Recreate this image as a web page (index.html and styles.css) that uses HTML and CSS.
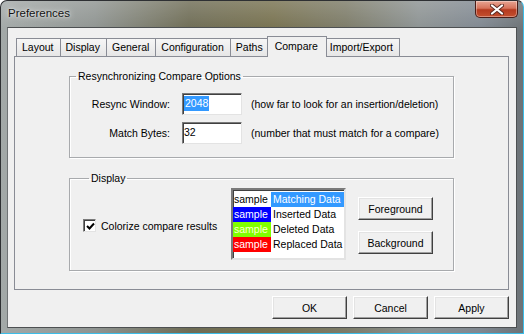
FILE: index.html
```html
<!DOCTYPE html>
<html lang="en">
<head>
    <meta charset="UTF-8">
    <title>Preferences</title>
    <link rel="stylesheet" href="styles.css">
</head>
<body>
    <div class="window">
        <div class="titlebar">
            <span class="title">Preferences</span>
            <button class="close" aria-label="Close">
                <svg width="14" height="11" viewBox="0 0 14 11">
                    <path d="M2 1.5 L12 9.5 M12 1.5 L2 9.5" stroke="#5a2a22" stroke-width="4" stroke-linecap="round"/>
                    <path d="M2 1.5 L12 9.5 M12 1.5 L2 9.5" stroke="#fff" stroke-width="2.2" stroke-linecap="round"/>
                </svg>
            </button>
        </div>

        <div class="client">
            <div class="tabs">
                <span class="tab">Layout</span>
                <span class="tab">Display</span>
                <span class="tab">General</span>
                <span class="tab">Configuration</span>
                <span class="tab">Paths</span>
                <span class="tab active">Compare</span>
                <span class="tab">Import/Export</span>
            </div>

            <div class="panel">
                <fieldset class="group resync">
                    <legend>Resynchronizing Compare Options</legend>
                    <div class="field-row">
                        <label>Resync Window:</label>
                        <span class="edit"><span class="selected">2048</span></span>
                        <span class="hint">(how far to look for an insertion/deletion)</span>
                    </div>
                    <div class="field-row">
                        <label>Match Bytes:</label>
                        <span class="edit">32</span>
                        <span class="hint">(number that must match for a compare)</span>
                    </div>
                </fieldset>

                <fieldset class="group display">
                    <legend>Display</legend>
                    <label class="check">
                        <span class="box">
                            <svg width="9" height="9" viewBox="0 0 9 9">
                                <path d="M1 4 L3.5 6.5 L8 1.5" fill="none" stroke="#000" stroke-width="2"/>
                            </svg>
                        </span>
                        Colorize compare results
                    </label>

                    <div class="listbox">
                        <div class="row"><span class="sample">sample</span><span class="name matching">Matching Data</span></div>
                        <div class="row"><span class="sample inserted">sample</span><span class="name">Inserted Data</span></div>
                        <div class="row"><span class="sample deleted">sample</span><span class="name">Deleted Data</span></div>
                        <div class="row"><span class="sample replaced">sample</span><span class="name">Replaced Data</span></div>
                    </div>

                    <div class="color-buttons">
                        <button class="btn">Foreground</button>
                        <button class="btn">Background</button>
                    </div>
                </fieldset>
            </div>

            <div class="actions">
                <button class="btn">OK</button>
                <button class="btn">Cancel</button>
                <button class="btn">Apply</button>
            </div>
        </div>
    </div>
</body>
</html>
```

FILE: styles.css
```css
* {
    box-sizing: border-box;
}

body {
    margin: 0;
    font-family: "Liberation Sans", Arial, sans-serif;
    font-size: 10.5px;
    color: #000;
}

.window {
    width: 524px;
    height: 334px;
    display: flex;
    flex-direction: column;
    border: 1px solid #2e3033;
    border-right-color: #3cbde8;
    border-bottom-color: #3cbde8;
    border-radius: 7px 7px 0 0;
    background:
        linear-gradient(180deg, rgba(255, 255, 255, 0.18), rgba(255, 255, 255, 0) 30px),
        linear-gradient(90deg, #a3a9a8 0%, #8f9491 18%, #6e6c55 36%, #77714f 52%, #7c7b68 66%, #8c9292 80%, #7f8790 92%, #6c7276 100%);
}

.titlebar {
    height: 26px;
    display: flex;
    align-items: flex-start;
    padding-left: 7px;
}

.title {
    margin-top: 5px;
    font-size: 11.5px;
    line-height: 14px;
    color: #111;
    text-shadow: 0 0 6px rgba(255, 255, 255, 0.9), 0 0 2px rgba(255, 255, 255, 0.8);
}

.close {
    margin-left: auto;
    margin-right: 5px;
    width: 43px;
    height: 17px;
    padding: 0;
    border: 1px solid #4b1d17;
    border-top: none;
    border-radius: 0 0 5px 5px;
    background: linear-gradient(180deg, #e8a593 0%, #d7735b 45%, #b53a1f 55%, #c4502f 100%);
    box-shadow: inset 0 0 0 1px rgba(255, 255, 255, 0.35);
    display: flex;
    align-items: center;
    justify-content: center;
}

.client {
    flex: 1;
    margin: 0 6px 5px 6px;
    padding: 0 7px 0 6px;
    border: 1px solid #4d5052;
    border-left-color: #6f7375;
    background: #f0f0f0;
    display: flex;
    flex-direction: column;
}

.tabs {
    display: flex;
    align-items: flex-end;
    height: 21px;
    margin-top: 8px;
    margin-bottom: -1px;
    padding-left: 2px;
}

.tab {
    height: 18px;
    margin-bottom: 1px;
    margin-left: -1px;
    padding: 0 6px 0 5px;
    line-height: 17px;
    border: 1px solid #898c95;
    border-bottom: none;
    background: linear-gradient(180deg, #f6f6f6, #e6e6e6);
}

.tab:first-child {
    margin-left: 0;
}

.tab.active {
    position: relative;
    z-index: 1;
    height: 21px;
    margin: 0 -2px 0 -3px;
    padding: 0 8px 0 7px;
    line-height: 19px;
    background: #f0f0f0;
}

.panel {
    height: 234px;
    border: 1px solid #898c95;
    background: #f0f0f0;
}

.group {
    margin: 13px 54px 0;
    border: 1px solid #a8aaad;
    box-shadow: 1px 1px 0 #fff, inset 1px 1px 0 #fff;
    min-width: 0;
}

.group legend {
    margin-left: 6px;
    padding: 0 2px;
    line-height: 13px;
}

.resync {
    padding: 10px 0 13px 0;
}

.field-row {
    display: grid;
    grid-template-columns: 100px 60px auto;
    column-gap: 12px;
    align-items: center;
}

.field-row + .field-row {
    margin-top: 7px;
}

.field-row label {
    text-align: right;
}

.field-row .hint {
    margin-left: -3px;
}

.edit {
    height: 22px;
    padding: 2px 0 0 1px;
    line-height: 15px;
    background: #fff;
    border: 1px solid;
    border-color: #7a7a7a #e3e3e3 #e3e3e3 #7a7a7a;
    box-shadow: inset 1px 1px 0 #404040;
}

.edit .selected {
    display: inline-block;
    padding: 0 1px;
    background: #3399ff;
    color: #fff;
}

.display {
    display: flex;
    align-items: center;
    padding: 3px 0 10px 13px;
    margin-top: 14px;
}

.check {
    width: 148px;
    display: flex;
    align-items: center;
    gap: 5px;
    margin-top: 3px;
}

.box {
    width: 13px;
    height: 13px;
    background: #fff;
    border: 1px solid;
    border-color: #7a7a7a #e3e3e3 #e3e3e3 #7a7a7a;
    box-shadow: inset 1px 1px 0 #404040;
    display: flex;
    align-items: center;
    justify-content: center;
    padding: 1px 0 0 1px;
}

.listbox {
    width: 115px;
    height: 72px;
    padding-top: 2px;
    background: #fff;
    border: 2px solid;
    border-color: #7a7a7a #e3e3e3 #e3e3e3 #7a7a7a;
    box-shadow: inset 1px 1px 0 #404040;
}

.row {
    display: flex;
    line-height: 15px;
}

.sample {
    width: 38px;
    padding-left: 1px;
}

.name {
    flex: 1;
    padding-left: 2px;
}

.name.matching {
    background: #3399ff;
    color: #fff;
}

.sample.inserted {
    background: #0000ff;
    color: #fff;
}

.sample.deleted {
    background: #80ff00;
    color: #ffffd0;
}

.sample.replaced {
    background: #ff0000;
    color: #fff;
}

.color-buttons {
    display: flex;
    flex-direction: column;
    gap: 11px;
    margin-left: 12px;
    margin-top: 3px;
}

.btn {
    width: 75px;
    height: 23px;
    padding: 0;
    font: inherit;
    color: #000;
    background: #f0f0f0;
    border: 1px solid;
    border-color: #fff #404040 #404040 #fff;
    box-shadow: inset -1px -1px 0 #a0a0a0, inset 1px 1px 0 #e3e3e3;
}

.actions {
    display: flex;
    justify-content: flex-end;
    gap: 6px;
    margin-top: 6px;
}
```
